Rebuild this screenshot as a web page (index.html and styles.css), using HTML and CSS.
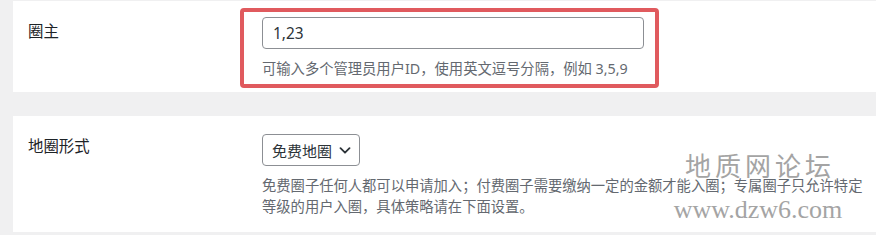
FILE: index.html
```html
<!DOCTYPE html>
<html lang="zh-CN">
<head>
<meta charset="utf-8">
<title>圈子设置</title>
<link rel="stylesheet" href="styles.css">
</head>
<body>
<div class="page">
  <section class="panel panel-owner">
    <div class="row">
      <div class="label">圈主</div>
      <div class="field">
        <div class="highlight"></div>
        <input class="text-input" type="text" value="1,23">
        <p class="desc">可输入多个管理员用户ID，使用英文逗号分隔，例如 3,5,9</p>
      </div>
    </div>
  </section>
  <section class="panel panel-type">
    <div class="row">
      <div class="label">地圈形式</div>
      <div class="field">
        <div class="select">
          <span class="select-text">免费地圈</span>
          <svg class="chevron" width="12" height="7" viewBox="0 0 12 7"><path d="M1.5 1.2 L6 5.7 L10.5 1.2" fill="none" stroke="#2c3338" stroke-width="1.8" stroke-linecap="round" stroke-linejoin="round"/></svg>
        </div>
        <p class="desc desc-wide">免费圈子任何人都可以申请加入；付费圈子需要缴纳一定的金额才能入圈；专属圈子只允许特定等级的用户入圈，具体策略请在下面设置。</p>
      </div>
    </div>
    <div class="watermark">
      <span class="wm-cn">地质网论坛</span>
      <span class="wm-url">www.dzw6.com</span>
    </div>
  </section>
</div>
</body>
</html>
```

FILE: styles.css
```css
html, body {
  margin: 0;
  padding: 0;
  background: #f0f0f1;
}
body {
  font-family: "Noto Sans", "Noto Sans CJK SC", sans-serif;
  color: #1d2327;
}
.page {
  padding: 1px 0 0 13px;
}
.panel {
  position: relative;
  background: #ffffff;
  padding: 16px 0 13px 0;
}
.panel-type {
  margin-top: 24px;
  padding-bottom: 15px;
}
.row {
  display: flex;
  align-items: flex-start;
}
.label {
  width: 234px;
  padding: 4px 0 0 15px;
  font-size: 15.4px;
  line-height: 22px;
  color: #1d2327;
}
.field {
  position: relative;
}
.highlight {
  position: absolute;
  left: -22px;
  top: -9px;
  width: 419px;
  height: 80px;
  box-sizing: border-box;
  border: 4px solid #e05a5e;
  border-radius: 4px;
}
.text-input {
  display: block;
  box-sizing: border-box;
  width: 382px;
  height: 32px;
  margin: 0;
  padding: 0 10px;
  border: 1px solid #8c8f94;
  border-radius: 4px;
  font-family: "Noto Sans", "Noto Sans CJK SC", sans-serif;
  font-size: 15.4px;
  color: #2c3338;
  background: #fff;
}
.desc {
  margin: 9px 0 0 0;
  font-size: 14.3px;
  line-height: 21px;
  color: #646970;
}
.desc-wide {
  width: 608px;
}
.select {
  display: inline-flex;
  align-items: center;
  gap: 7px;
  box-sizing: border-box;
  height: 32px;
  margin-top: 2px;
  padding: 0 8px 0 9px;
  border: 1px solid #8c8f94;
  border-radius: 4px;
  font-size: 15px;
  color: #2c3338;
  background: #fff;
  white-space: nowrap;
}
.chevron {
  flex: none;
}
.watermark {
  position: absolute;
  left: 645px;
  top: 38px;
  width: 200px;
  display: flex;
  flex-direction: column;
  align-items: center;
  gap: 14px;
  color: #a4a4a4;
  pointer-events: none;
}
.wm-cn {
  font-family: "Liberation Serif", "Noto Sans CJK SC", serif;
  font-size: 26px;
  line-height: 28px;
  letter-spacing: 4px;
  padding-left: 4px;
}
.wm-url {
  font-family: "Liberation Serif", serif;
  font-size: 26px;
  line-height: 28px;
}
```
